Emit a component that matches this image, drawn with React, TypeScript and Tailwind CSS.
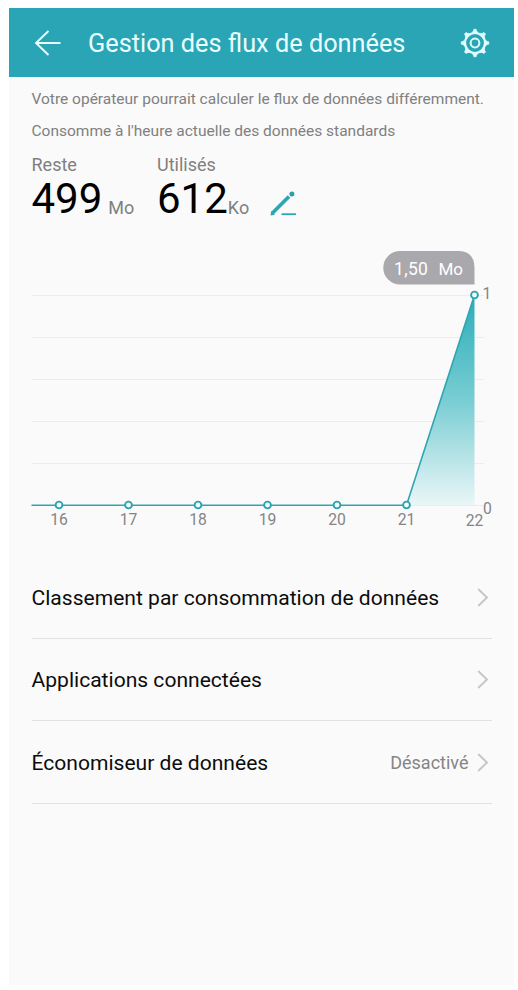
import React from "react";

const days = [
  { label: "16", x: 50 },
  { label: "17", x: 119.5 },
  { label: "18", x: 189 },
  { label: "19", x: 258.5 },
  { label: "20", x: 328 },
  { label: "21", x: 397.5 },
];

const gridLines = [46, 88, 130, 172, 214, 256];

function BackIcon() {
  return (
    <svg width="28" height="28" viewBox="0 0 28 28" fill="none" stroke="#e9ffff" strokeWidth="1.9">
      <path d="M15.500 2 3 14l12.500 12M3 14h24.500" />
    </svg>
  );
}

function GearIcon() {
  const teeth = [0, 45, 90, 135, 180, 225, 270, 315];
  return (
    <svg width="30" height="30" viewBox="-15 -15 30 30" fill="none" stroke="#e2ffff">
      <circle r="10" strokeWidth="2.200" />
      <circle r="4.400" strokeWidth="2" />
      {teeth.map((angle) => (
        <path
          key={angle}
          d="M-3-10.300-1.500-12.300-1.200-13.800H1.200L1.500-12.300 3-10.300Z"
          transform={`rotate(${angle})`}
          fill="#e2ffff"
          strokeWidth="0.600"
        />
      ))}
    </svg>
  );
}

function PencilIcon() {
  return (
    <svg width="28" height="26" viewBox="0 0 28 26" fill="none">
      <path d="M2.500 22 19 5.500" stroke="#2ba7b4" strokeWidth="3.800" />
      <path d="M.6 24.600 1 20 5 23.800Z" fill="#2ba7b4" />
      <circle cx="21.900" cy="2.900" r="2.500" fill="#2d9eaa" />
      <path d="M11.500 23.200H26" stroke="#2ba7b4" strokeWidth="1.800" />
    </svg>
  );
}

function Chevron() {
  return (
    <svg width="12" height="20" viewBox="0 0 12 20" fill="none" stroke="#c6c6c6" strokeWidth="1.900">
      <path d="M1.200 2 10 10.500 1.200 19" />
    </svg>
  );
}

function Chart() {
  return (
    <svg className="block" width="505" height="300" viewBox="0 0 505 300">
      <defs>
        <linearGradient id="usage" x1="0" y1="46" x2="0" y2="256" gradientUnits="userSpaceOnUse">
          <stop offset="0" stopColor="#2badb8" />
          <stop offset="0.500" stopColor="#78cdd3" />
          <stop offset="1" stopColor="#eaf6f7" />
        </linearGradient>
      </defs>
      {gridLines.map((y) => (
        <path key={y} d={`M22.500 ${y + 0.5}H475`} stroke="#ededed" />
      ))}
      <path d="M397.500 256 465.500 46V256Z" fill="url(#usage)" />
      <path d="M22.500 256.300H397.500L465.500 46" fill="none" stroke="#2fa5b1" strokeWidth="1.600" />
      <g fill="#f5ffff" stroke="#2ba3af" strokeWidth="1.900">
        {days.map((d) => (
          <circle key={d.label} cx={d.x} cy="256" r="3.400" />
        ))}
        <circle cx="465.500" cy="46" r="3.400" />
      </g>
      <path d="M391 2H449Q465.500 2 465.500 19V35.500H391A16.750 16.750 0 0 1 391 2Z" fill="#a9a8ac" />
      <g fontFamily="Roboto, sans-serif" fill="#858585">
        <g fontSize="15.700" textAnchor="middle">
          {days.map((d) => (
            <text key={d.label} x={d.x} y="276">
              {d.label}
            </text>
          ))}
          <text x="465.500" y="277">22</text>
          <text x="478" y="50">1</text>
          <text x="478.500" y="265">0</text>
        </g>
        <text x="385" y="26" fontSize="17.500" fill="#fff" letterSpacing="0.300">
          1,50
        </text>
        <text x="429.500" y="26" fontSize="17" fill="#fff">Mo</text>
      </g>
    </svg>
  );
}

function Row({ title, value }: { title: string; value?: string }) {
  return (
    <div className="flex h-[82.5px] items-center border-b border-[#e2e2e2] pr-[3px]">
      <span className="grow pt-[2px] text-[21.07px] leading-[26px] text-[#0c0c0c]">{title}</span>
      {value && <span className="mr-[8px] pt-[2px] text-[18px] leading-[24px] text-[#858585]">{value}</span>}
      <Chevron />
    </div>
  );
}

export default function App() {
  return (
    <div className="h-[990px] w-[518px] overflow-hidden bg-white pt-2 pl-[9px] font-[Roboto,sans-serif]">
      <main className="h-[977px] w-[505px] bg-[#fafafa]">
        <header className="flex h-[69px] items-center bg-[#2aa5b5] pr-6 pl-6">
          <BackIcon />
          <h1 className="ml-[27px] grow pt-[3px] text-[25.3px] leading-[32px] whitespace-nowrap text-[#e9ffff]">
            Gestion des flux de données
          </h1>
          <GearIcon />
        </header>
        <section className="h-[172px] pl-[22.5px] whitespace-nowrap text-[#808080]">
          <p className="pt-[12px] text-[15.5px] leading-[20px]">
            Votre opérateur pourrait calculer le flux de données différemment.
          </p>
          <p className="pt-[12px] text-[15.5px] leading-[20px]">
            Consomme à l'heure actuelle des données standards
          </p>
          <div className="flex pt-[12px]">
            <div className="w-[125.5px]">
              <div className="text-[18px] leading-[24px]">Reste</div>
              <div className="flex items-baseline pt-px leading-[42px]">
                <span className="text-[42px] text-black">499</span>
                <span className="ml-[6px] translate-y-px text-[18px]">Mo</span>
              </div>
            </div>
            <div className="w-[113px]">
              <div className="text-[18px] leading-[24px]">Utilisés</div>
              <div className="flex items-baseline pt-px leading-[42px]">
                <span className="text-[42px] text-black">612</span>
                <span className="translate-y-px text-[18px]">Ko</span>
              </div>
            </div>
            <div className="pt-[38px]">
              <PencilIcon />
            </div>
          </div>
        </section>
        <Chart />
        <nav className="mt-[7px] ml-[22.5px] w-[460px]">
          <Row title="Classement par consommation de données" />
          <Row title="Applications connectées" />
          <Row title="Économiseur de données" value="Désactivé" />
        </nav>
      </main>
    </div>
  );
}
